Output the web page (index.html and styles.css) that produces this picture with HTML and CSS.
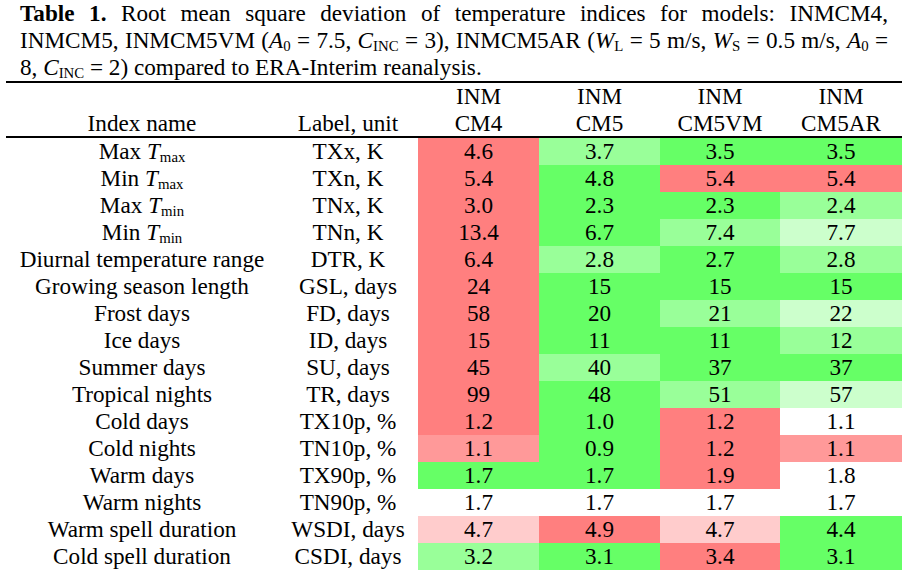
FILE: index.html
```html
<!DOCTYPE html>
<html lang="en">
<head>
<meta charset="utf-8">
<title>Table 1</title>
<link rel="stylesheet" href="styles.css">
</head>
<body>
<div class="page">
  <div class="caption">
    <span class="line just"><b>Table 1.</b> Root mean square deviation of temperature indices for models: INMCM4,</span>
    <span class="line just">INMCM5, INMCM5VM (<i>A</i><sub>0</sub> = 7.5, <i>C</i><sub>INC</sub> = 3), INMCM5AR (<i>W</i><sub>L</sub> = 5 m/s, <i>W</i><sub>S</sub> = 0.5 m/s, <i>A</i><sub>0</sub> =</span>
    <span class="line">8, <i>C</i><sub>INC</sub> = 2) compared to ERA-Interim reanalysis.</span>
  </div>
  <table class="data">
    <colgroup>
      <col class="c-name">
      <col class="c-label">
      <col class="c-m1">
      <col class="c-m2">
      <col class="c-m3">
      <col class="c-m4">
    </colgroup>
    <thead>
      <tr>
        <th>Index name</th>
        <th>Label, unit</th>
        <th>INM<br>CM4</th>
        <th>INM<br>CM5</th>
        <th>INM<br>CM5VM</th>
        <th>INM<br>CM5AR</th>
      </tr>
    </thead>
    <tbody>
      <tr><td>Max <i>T</i><sub>max</sub></td><td>TXx, K</td><td class="r">4.6</td><td class="g2">3.7</td><td class="g">3.5</td><td class="g">3.5</td></tr>
      <tr><td>Min <i>T</i><sub>max</sub></td><td>TXn, K</td><td class="r">5.4</td><td class="g">4.8</td><td class="r">5.4</td><td class="r">5.4</td></tr>
      <tr><td>Max <i>T</i><sub>min</sub></td><td>TNx, K</td><td class="r">3.0</td><td class="g">2.3</td><td class="g">2.3</td><td class="g2">2.4</td></tr>
      <tr><td>Min <i>T</i><sub>min</sub></td><td>TNn, K</td><td class="r">13.4</td><td class="g">6.7</td><td class="g2">7.4</td><td class="g3">7.7</td></tr>
      <tr><td>Diurnal temperature range</td><td>DTR, K</td><td class="r">6.4</td><td class="g2">2.8</td><td class="g">2.7</td><td class="g2">2.8</td></tr>
      <tr><td>Growing season length</td><td>GSL, days</td><td class="r">24</td><td class="g">15</td><td class="g">15</td><td class="g">15</td></tr>
      <tr><td>Frost days</td><td>FD, days</td><td class="r">58</td><td class="g">20</td><td class="g2">21</td><td class="g3">22</td></tr>
      <tr><td>Ice days</td><td>ID, days</td><td class="r">15</td><td class="g">11</td><td class="g">11</td><td class="g2">12</td></tr>
      <tr><td>Summer days</td><td>SU, days</td><td class="r">45</td><td class="g2">40</td><td class="g">37</td><td class="g">37</td></tr>
      <tr><td>Tropical nights</td><td>TR, days</td><td class="r">99</td><td class="g">48</td><td class="g2">51</td><td class="g3">57</td></tr>
      <tr><td>Cold days</td><td>TX10p, %</td><td class="r">1.2</td><td class="g">1.0</td><td class="r">1.2</td><td>1.1</td></tr>
      <tr><td>Cold nights</td><td>TN10p, %</td><td class="r2">1.1</td><td class="g">0.9</td><td class="r">1.2</td><td class="r2">1.1</td></tr>
      <tr><td>Warm days</td><td>TX90p, %</td><td class="g">1.7</td><td class="g">1.7</td><td class="r">1.9</td><td>1.8</td></tr>
      <tr><td>Warm nights</td><td>TN90p, %</td><td>1.7</td><td>1.7</td><td>1.7</td><td>1.7</td></tr>
      <tr><td>Warm spell duration</td><td>WSDI, days</td><td class="r3">4.7</td><td class="r">4.9</td><td class="r3">4.7</td><td class="g">4.4</td></tr>
      <tr><td>Cold spell duration</td><td>CSDI, days</td><td class="g2">3.2</td><td class="g">3.1</td><td class="r">3.4</td><td class="g">3.1</td></tr>
    </tbody>
  </table>
</div>
</body>
</html>
```
FILE: styles.css
```css
html, body {
  margin: 0;
  padding: 0;
  background: #ffffff;
}

body {
  font-family: "Liberation Serif", "Times New Roman", serif;
  font-size: 23.2px;
  color: #000000;
}

.page {
  width: 917px;
}

.caption {
  margin: 0 29px 0 20px;
  line-height: 27px;
  height: 81px;
}

.caption .line {
  display: block;
  white-space: nowrap;
}

.caption .just {
  text-align: justify;
  text-align-last: justify;
  white-space: normal;
}

sub {
  font-size: 0.64em;
  line-height: 0;
  vertical-align: -0.22em;
}

.data {
  margin-left: 6px;
  width: 896px;
  table-layout: fixed;
  border-collapse: separate;
  border-spacing: 0;
}

.c-name { width: 272px; }
.c-label { width: 140px; }
.c-m1 { width: 121px; }
.c-m2 { width: 121px; }
.c-m3 { width: 120px; }
.c-m4 { width: 122px; }

.data th,
.data td {
  padding: 0;
  text-align: center;
  font-weight: normal;
}

.data th {
  line-height: 26.5px;
  vertical-align: bottom;
  border-top: 2px solid #000000;
  border-bottom: 2px solid #000000;
}

.data td {
  height: 27px;
  line-height: 27px;
  vertical-align: middle;
  white-space: nowrap;
}

.data td.r  { background: #ff7f7f; }
.data td.r2 { background: #ff9999; }
.data td.r3 { background: #ffcccc; }
.data td.g  { background: #66ff66; }
.data td.g2 { background: #99ff99; }
.data td.g3 { background: #ccffcc; }
```
